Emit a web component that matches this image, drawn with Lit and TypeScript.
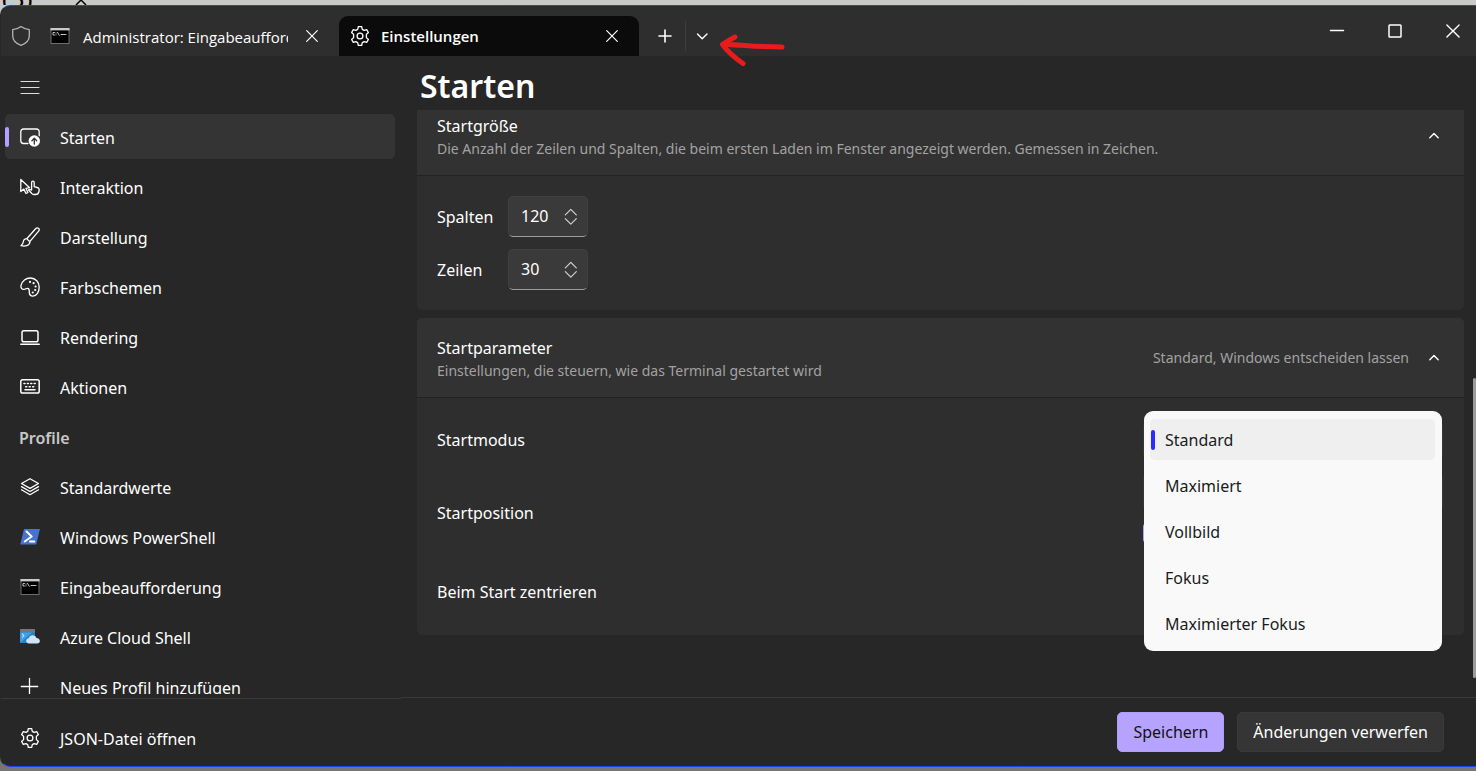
import { LitElement, html, css, svg, nothing } from "lit";
import { customElement, property, state } from "lit/decorators.js";

const gear = svg`<path d="M8.300.700h3.400l.6 2.700 1.800 1 2.600-.8 1.700 2.900-2 1.900v3.200l2 1.900-1.700 2.900-2.600-.8-1.800 1-.6 2.700H8.300l-.6-2.700-1.800-1-2.600.8-1.700-2.900 2-1.900V8.400l-2-1.900 1.700-2.900 2.600.8 1.800-1z"/><circle cx="10" cy="10" r="2.900"/>`;
const cmd = svg`<g stroke="none"><rect x=".5" y="2" width="19" height="16" fill="#6d6d6d"/><rect x=".5" y="2" width="19" height="2.500" fill="#c9c9c9"/><rect x="1.500" y="4.500" width="17" height="12.500" fill="#000"/></g><path d="M4.500 6.500H3v2.500h1.500M6 7v.3M6 8.700v.3M7.500 6.300 9.200 9.300M11 8.500h5" stroke="#d8d8d8" stroke-width=".9"/>`;

const icons: Record<string, unknown> = {
  shield: svg`<path d="M10 .6c2.500 1.900 5.200 2.900 8.300 3v6c0 4.600-2.800 7.900-8.300 9.800C4.500 17.500 1.700 14.200 1.700 9.600v-6C4.800 3.500 7.500 2.500 10 .6z" stroke="#b5b5b5"/>`,
  cmd,
  gear,
  close: svg`<path d="m4.700 4.700 10.600 10.600m0-10.600L4.700 15.300" stroke-width="1.200"/>`,
  plus: svg`<path d="M10 4v12M4 10h12" stroke-width="1.600"/>`,
  down: svg`<path d="m5.500 8 4.700 4.700L15 8" stroke-width="1.400"/>`,
  up: svg`<path d="m5.800 11.700 4.200-4.200 4.200 4.200" stroke-width="1.400"/>`,
  min: svg`<path d="M3.500 9.500h13" stroke-width="1.500"/>`,
  max: svg`<rect x="4" y="4" width="12" height="12" rx=".8" stroke-width="1.500"/>`,
  winclose: svg`<path d="m3.900 3.900 12.200 12.200m0-12.200L3.900 16.100" stroke-width="1.400"/>`,
  menu: svg`<path d="M1 4.500h18M1 10.500h18M1 16.500h18" stroke-width="1.200" stroke="#dedede"/>`,
  start: svg`<path d="M8 16.500H3.500A2.700 2.700 0 0 1 .8 13.800V4.700A2.700 2.700 0 0 1 3.500 2h13a2.700 2.700 0 0 1 2.700 2.700v4"/><circle cx="14.300" cy="14" r="5.700" fill="#fff" stroke="none"/><path d="M14.300 17v-5.600m-2.400 2.300 2.400-2.400 2.400 2.400" stroke="#333"/>`,
  interact: svg`<path d="M.8 2.500v12l3-2.400 2.200 4.400 1.900-1-2-4.200 3.700-.6z"/><path d="M10 12.500l1.600.6V5.400c0-1.700 2.600-1.700 2.600 0v4.300l3 .8c1.300.3 2.100 1.200 2 2.500l-.4 2c-.3 1.600-1.500 2.500-3.300 2.500h-1.700c-1 0-1.600-.5-2.200-1.200l-3-3.300c.2-.7.800-.9 1.400-.5z"/>`,
  brush: svg`<path d="M7 11.500 15.600 1.800c.9-1 2-1.200 2.900-.5.900.8.900 1.900.1 2.900L10 14.300c-1.200-.3-2.400-1.500-3-2.800zM7 11.600c-2.300 0-3.500 1-3.700 3.200-.1 1.700-.8 2.700-2.300 3.900 3.400.8 9 .4 9-4.400"/>`,
  palette: svg`<path d="M1 8.500C2 3.800 6 .9 10.500 1 15.600 1.200 19.200 5.100 19.200 10c0 5-2.500 9.100-6.300 9.100-2.300 0-3.500-1.500-3.600-3.700 0-2.100.3-3.800-1.500-4.100-1.300-.2-2.200 1-3.800 1.100C1.800 12.500.6 10.600 1 8.500z"/><g fill="#fff" stroke="none"><circle cx="10" cy="4.900" r="1.100"/><circle cx="13.600" cy="6.200" r="1.100"/><circle cx="15.600" cy="9.500" r="1.100"/><circle cx="15.200" cy="13" r="1.100"/><circle cx="12.800" cy="15.500" r="1.100"/></g>`,
  laptop: svg`<rect x="2" y="3.700" width="16" height="11" rx="1.800" stroke-width="1.500"/><path d="M.8 17.300h18.400" stroke-width="1.500"/>`,
  keyboard: svg`<rect x=".8" y="2.800" width="18.400" height="13.200" rx="1.800" stroke-width="1.500"/><path d="M4 6.500h1m2.400 0h1m2.400 0h1m2.400 0h1M5.700 9.700h1m2.500 0h1m2.500 0h1M5 12.800h10" stroke-width="1.600"/>`,
  layers: svg`<path d="m10 1.700 8.500 4.800L10 11.400 1.500 6.500zM1.500 9.600l8.500 4.900 8.500-4.900M1.500 12.800 10 17.700l8.500-4.900"/>`,
  powershell: svg`<path d="M4 2h15.900L16.300 17.600H.3z" fill="#4773ce" stroke="none"/><path d="m6.500 4.500 5.200 5-7 5M10 14.500h4.300" stroke-width="1.900"/>`,
  azure: svg`<g stroke="none"><rect x=".2" y="2" width="14.800" height="14" rx=".5" fill="#1585d8"/><rect x=".2" y="2" width="14.800" height="3.500" fill="#777"/><path d="M.2 16 12 5.500H.2z" fill="#42a1e6"/><path d="M9.300 16.600c-4 0-4.200-5.100-.5-5.400.8-3.900 6.600-4 7.700-.2 4.300.1 4.500 5.600.6 5.600z" fill="#cfe5f6"/></g><path d="m2.300 7 1.800 1.600-1.800 1.600" stroke-width=".9"/>`,
  add: svg`<path d="M9.500 1.500v16M1.300 9.500h16.400"/>`,
  spin: svg`<path d="m4.300 7.900 5.500-5.500 5.500 5.500M4.300 11.600l5.500 5.500 5.500-5.500" stroke-width="1.200"/>`,
};

@customElement("ui-icon")
class UiIcon extends LitElement {
  @property() name = "";
  static styles = css`
    :host { display: block; width: 20px; height: 20px; flex: none; }
    svg { display: block; width: 100%; height: 100%; fill: none; stroke: currentColor; stroke-width: 1.300; stroke-linecap: round; stroke-linejoin: round; }
  `;
  render() {
    return html`<svg viewBox="0 0 20 20" aria-hidden="true">${icons[this.name]}</svg>`;
  }
}

const navItems = [
  ["start", "Starten"],
  ["interact", "Interaktion"],
  ["brush", "Darstellung"],
  ["palette", "Farbschemen"],
  ["laptop", "Rendering"],
  ["keyboard", "Aktionen"],
];
const profiles = [
  ["layers", "Standardwerte"],
  ["powershell", "Windows PowerShell"],
  ["cmd", "Eingabeaufforderung"],
  ["azure", "Azure Cloud Shell"],
  ["add", "Neues Profil hinzufügen"],
];
const modes = ["Standard", "Maximiert", "Vollbild", "Fokus", "Maximierter Fokus"];

@customElement("app-root")
class AppRoot extends LitElement {
  @state() page = "Starten";
  @state() mode = "Standard";

  static styles = css`
    :host {
      display: flex; flex-direction: column; height: 100vh; overflow: hidden; position: relative;
      background: linear-gradient(#cacaca, #757575); color: #fff;
      font: 16px/24px "Noto Sans", "Open Sans", sans-serif;
    }
    * { box-sizing: border-box; }
    button, input, select { font: inherit; color: inherit; border: 0; background: none; margin: 0; padding: 0; }
    .behind { flex: none; height: 5px; display: flex; align-items: flex-end; gap: 42px; padding-left: 2px; overflow: hidden; color: #000; font-size: 26px; line-height: 14px; }
    .behind svg { width: 14px; height: 6px; fill: none; stroke: #000; stroke-width: 1.500; }
    .window { flex: 1; min-height: 0; margin-bottom: 4px; display: flex; flex-direction: column; overflow: hidden; background: #272727; border: 1px solid #1c47e8; border-left-color: transparent; border-right: 0; border-radius: 10px 0 0 10px; }
    .titlebar { flex: none; height: 50px; display: flex; background: #2e2e2e; padding-left: 10px; font-size: 15px; }
    .titlebar > ui-icon { margin-top: 20px; }
    .tab { display: flex; align-items: center; height: 40px; margin-top: 10px; padding: 0 17px 0 11px; border-radius: 9px 9px 0 0; font-family: "Open Sans", "Noto Sans", sans-serif; }
    .tab.idle { width: 308px; padding: 0 17px 0 19px; }
    .tab.active { width: 300px; background: #0b0b0b; font-weight: 600; }
    .tab-title { flex: 1; min-width: 0; overflow: hidden; white-space: nowrap; margin: 0 14px 0 13px; text-align: left; }
    .tab.idle .tab-title { padding-top: 2px; }
    .tab.active .tab-title { margin-left: 11px; }
    .newtab { display: flex; align-items: center; margin-top: 10px; height: 40px; }
    .newtab button { padding: 0 10px 0 16px; }
    .newtab button + button { border-left: 1px solid #3e3e3e; padding: 5px 10px 5px 6px; }
    .controls { margin: 0 -6px 0 auto; display: flex; }
    .controls button { width: 58px; display: flex; justify-content: center; padding-top: 15px; }
    .arrow { position: absolute; left: 718px; top: 32px; width: 68px; height: 36px; fill: none; stroke: #e81c1c; stroke-width: 5; stroke-linecap: round; stroke-linejoin: round; }
    .body { flex: 1; min-height: 0; display: flex; }
    aside { flex: none; width: 400px; display: flex; flex-direction: column; }
    .menu { flex: none; align-self: flex-start; padding: 21px 19px 17px; }
    nav { flex: 1; min-height: 0; overflow: hidden; padding: 0 6px 0 4px; margin-bottom: 4px; }
    .item { display: flex; align-items: center; gap: 20px; width: 100%; height: 45px; margin-bottom: 5px; padding: 0 15px 0 15px; border-radius: 5px; position: relative; text-align: left; white-space: nowrap; }
    .item[aria-current] { background: #343434; }
    .item[aria-current]::before { content: ""; position: absolute; left: 0; top: 13px; width: 4px; height: 20px; border-radius: 2px; background: #b3a0ff; }
    .item .text { padding-top: 2px; }
    .group { height: 45px; margin: 0 0 5px; padding-left: 14px; font-size: 16px; line-height: 48px; font-weight: 600; color: #c8c8c8; }
    .json { flex: none; height: 68px; border-top: 1px solid #3a3a3a; padding: 16px 4px 0; }
    main { flex: 1; min-width: 0; display: flex; flex-direction: column; }
    h1 { flex: none; height: 54px; margin: 0 0 0 19px; font-size: 32px; line-height: 60px; font-weight: 600; }
    .scroller { flex: 1; min-height: 0; overflow: hidden; position: relative; padding: 0 12px 0 16px; }
    .cards { margin-top: -14px; display: flex; flex-direction: column; gap: 8px; }
    .card { border-radius: 5px; background: #2e2e2e; }
    .head { display: flex; align-items: center; width: 100%; min-height: 80px; padding: 0 20px; border-radius: 5px 5px 0 0; background: #323232; border-bottom: 1px solid #222; text-align: left; }
    .head .titles { flex: 1; display: flex; flex-direction: column; padding-top: 2px; }
    .desc { font-size: 14px; line-height: 22px; color: #a2a2a2; }
    .value { font-size: 14px; color: #a2a2a2; margin-right: 15px; }
    .size { padding: 20px; display: flex; flex-direction: column; gap: 12px; }
    .size .line { display: flex; align-items: center; }
    .size label { width: 71px; }
    .number { display: flex; align-items: center; width: 80px; height: 41px; border-radius: 5px; background: #3a3a3a; border: 1px solid #404040; border-bottom-color: #9c9c9c; padding-left: 12px; }
    .number input { width: 40px; outline: 0; padding-bottom: 2px; }
    .number button { color: #d0d0d0; }
    .launch { padding: 8px 21px 3px 20px; }
    .row { display: flex; align-items: center; justify-content: space-between; height: 68px; }
    .row.position { height: 78px; }
    .row.center { height: 80px; }
    .field { position: relative; width: 300px; height: 36px; }
    .field select, .field .pos { width: 100%; height: 36px; border-radius: 5px; background: #353535; border: 1px solid #383838; color: transparent; appearance: none; display: block; }
    .position .field { align-self: flex-start; height: 70px; }
    .position input[type="checkbox"] { display: block; appearance: none; width: 20px; height: 20px; margin-top: 13px; border-radius: 4px; background: #b3a0ff; }
    .popup { position: absolute; z-index: 2; left: 1px; right: 1px; top: -11px; padding: 8px 7px 7px 6px; border-radius: 9px; background: #f9f9f9; color: #1b1b1b; display: flex; flex-direction: column; gap: 5px; }
    .option { display: block; position: relative; height: 41px; padding-left: 15px; border-radius: 5px; text-align: left; }
    .option[aria-selected="true"] { background: #efefef; }
    .option[aria-selected="true"]::before { content: ""; position: absolute; left: 1px; top: 11px; width: 4px; height: 20px; border-radius: 2px; background: #2b2bff; }
    .thumb { position: absolute; right: 0; top: 268px; width: 3px; height: 300px; border-radius: 2px; background: #9b9b9b; }
    footer { flex: none; height: 69px; border-top: 1px solid #3a3a3a; display: flex; justify-content: flex-end; align-items: flex-start; gap: 13px; padding: 14px 32px 0 0; }
    footer button { height: 40px; padding: 0 15px; border-radius: 5px; background: #353535; border: 1px solid #3a3a3a; white-space: nowrap; }
    footer .save { background: #b5a3ff; border-color: #b09ff5; color: #111; }
  `;

  item([icon, label]: string[]) {
    return html`<button class="item" aria-current=${this.page === label ? "page" : nothing} @click=${() => (this.page = label)}>
      <ui-icon name=${icon}></ui-icon><span class="text">${label}</span>
    </button>`;
  }

  number(id: string, label: string, value: string) {
    return html`<div class="line">
      <label for=${id}>${label}</label>
      <div class="number"><input id=${id} type="text" inputmode="numeric" .value=${value} /><button aria-label="${label} ändern"><ui-icon name="spin"></ui-icon></button></div>
    </div>`;
  }

  render() {
    return html`
      <div class="behind" aria-hidden="true"><span>(3)</span><svg viewBox="0 0 14 6"><path d="m2 6 5-5 5 5" /></svg></div>
      <div class="window">
        <header class="titlebar">
          <ui-icon name="shield"></ui-icon>
          <div class="tab idle">
            <ui-icon name="cmd"></ui-icon><span class="tab-title">Administrator: Eingabeaufforderung</span>
            <button aria-label="Tab schließen"><ui-icon name="close"></ui-icon></button>
          </div>
          <div class="tab active">
            <ui-icon name="gear"></ui-icon><span class="tab-title">Einstellungen</span>
            <button aria-label="Tab schließen"><ui-icon name="close"></ui-icon></button>
          </div>
          <div class="newtab">
            <button aria-label="Neuer Tab"><ui-icon name="plus"></ui-icon></button>
            <button aria-label="Profil auswählen"><ui-icon name="down"></ui-icon></button>
          </div>
          <div class="controls">
            <button aria-label="Minimieren"><ui-icon name="min"></ui-icon></button>
            <button aria-label="Maximieren"><ui-icon name="max"></ui-icon></button>
            <button aria-label="Schließen"><ui-icon name="winclose"></ui-icon></button>
          </div>
        </header>
        <div class="body">
          <aside>
            <button class="menu" aria-label="Navigation"><ui-icon name="menu"></ui-icon></button>
            <nav>
              ${navItems.map((i) => this.item(i))}
              <h2 class="group">Profile</h2>
              ${profiles.map((i) => this.item(i))}
            </nav>
            <div class="json">${this.item(["gear", "JSON-Datei öffnen"])}</div>
          </aside>
          <main>
            <h1>Starten</h1>
            <div class="scroller">
              <div class="cards">
                <section class="card">
                  <button class="head" aria-expanded="true">
                    <span class="titles"><span>Startgröße</span><span class="desc">Die Anzahl der Zeilen und Spalten, die beim ersten Laden im Fenster angezeigt werden. Gemessen in Zeichen.</span></span>
                    <ui-icon name="up"></ui-icon>
                  </button>
                  <div class="size">
                    ${this.number("cols", "Spalten", "120")} ${this.number("rows", "Zeilen", "30")}
                  </div>
                </section>
                <section class="card">
                  <button class="head" aria-expanded="true">
                    <span class="titles"><span>Startparameter</span><span class="desc">Einstellungen, die steuern, wie das Terminal gestartet wird</span></span>
                    <span class="value">Standard, Windows entscheiden lassen</span>
                    <ui-icon name="up"></ui-icon>
                  </button>
                  <div class="launch">
                    <div class="row">
                      <label for="mode">Startmodus</label>
                      <div class="field">
                        <select id="mode" .value=${this.mode}>${modes.map((m) => html`<option>${m}</option>`)}</select>
                        <div class="popup" role="listbox" aria-label="Startmodus">
                          ${modes.map((m) => html`<button class="option" role="option" aria-selected=${this.mode === m ? "true" : "false"} @click=${() => (this.mode = m)}>${m}</button>`)}
                        </div>
                      </div>
                    </div>
                    <div class="row position">
                      <label for="pos">Startposition</label>
                      <div class="field"><input class="pos" id="pos" type="text" /><input type="checkbox" checked aria-label="Windows entscheiden lassen" /></div>
                    </div>
                    <div class="row center"><span>Beim Start zentrieren</span></div>
                  </div>
                </section>
              </div>
              <div class="thumb"></div>
            </div>
            <footer><button class="save">Speichern</button><button>Änderungen verwerfen</button></footer>
          </main>
        </div>
      </div>
      <svg class="arrow" viewBox="0 0 68 36" aria-hidden="true"><path d="M64 15C48 15 30 14 5 12M17 5C13 7 8 10 4.500 12.500 10 20 17 26 25 31.500" /></svg>
    `;
  }
}
